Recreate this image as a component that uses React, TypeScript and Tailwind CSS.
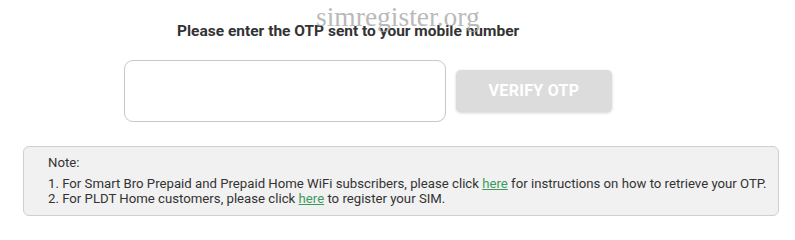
export default function App() {
  return (
    <div className="relative w-[795px] h-[240px] bg-white font-['Roboto',sans-serif] text-[#333]">
      <div className="flex flex-col pt-[21px] pl-[124px]">
        <h2 className="text-[15.5px] font-bold leading-[20px] ml-[53px]">
          Please enter the OTP sent to your mobile number
        </h2>
        <div className="flex items-center gap-[10px] mt-[19px]">
          <input
            type="text"
            className="w-[322px] h-[62px] rounded-[9px] border border-[#c8c8c8] bg-white outline-none"
          />
          <button
            type="button"
            disabled
            className="w-[156px] h-[42px] rounded-[5px] bg-[#dcdcdc] text-white font-bold text-[16px] tracking-[0.3px] shadow-[0_1px_3px_rgba(0,0,0,0.18)]"
          >
            VERIFY OTP
          </button>
        </div>
      </div>
      <div className="mx-[23px] w-[756px] mt-[24px] rounded-[6px] border border-[#cfcfcf] bg-[#f1f1f1] pl-[24px] pr-[6px] pt-[8px] pb-[9px] text-[13.2px] leading-[15px] whitespace-nowrap">
        <p className="mb-[6px]">Note:</p>
        <p>
          1. For Smart Bro Prepaid and Prepaid Home WiFi subscribers, please click{" "}
          <a href="#" className="text-[#3d9a5e] underline">here</a> for instructions on how to retrieve your OTP.
        </p>
        <p>
          2. For PLDT Home customers, please click{" "}
          <a href="#" className="text-[#3d9a5e] underline">here</a> to register your SIM.
        </p>
      </div>
      <div className="absolute left-[316px] top-[-4px] font-['Liberation_Serif',serif] text-[27.5px] text-[#a9a9a9] opacity-80 pointer-events-none">
        simregister.org
      </div>
    </div>
  );
}
